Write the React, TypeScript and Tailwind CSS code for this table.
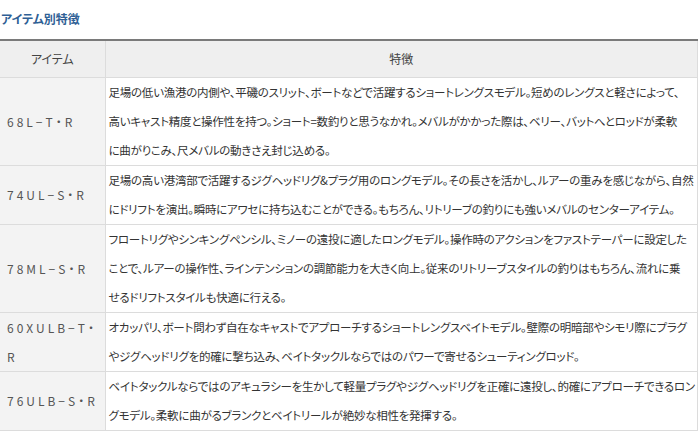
const ROWS: { item: string; lines: string[] }[] = [
  {
    item: "68L−T・R",
    lines: [
      "足場の低い漁港の内側や、平磯のスリット、ボートなどで活躍するショートレングスモデル。短めのレングスと軽さによって、",
      "高いキャスト精度と操作性を持つ。ショート=数釣りと思うなかれ。メバルがかかった際は、ベリー、バットへとロッドが柔軟",
      "に曲がりこみ、尺メバルの動きさえ封じ込める。",
    ],
  },
  {
    item: "74UL−S・R",
    lines: [
      "足場の高い港湾部で活躍するジグヘッドリグ&プラグ用のロングモデル。その長さを活かし、ルアーの重みを感じながら、自然",
      "にドリフトを演出。瞬時にアワセに持ち込むことができる。もちろん、リトリーブの釣りにも強いメバルのセンターアイテム。",
    ],
  },
  {
    item: "78ML−S・R",
    lines: [
      "フロートリグやシンキングペンシル、ミノーの遠投に適したロングモデル。操作時のアクションをファストテーパーに設定した",
      "ことで、ルアーの操作性、ラインテンションの調節能力を大きく向上。従来のリトリーブスタイルの釣りはもちろん、流れに乗",
      "せるドリフトスタイルも快適に行える。",
    ],
  },
  {
    item: "60XULB−T・R",
    lines: [
      "オカッパリ、ボート問わず自在なキャストでアプローチするショートレングスベイトモデル。壁際の明暗部やシモリ際にプラグ",
      "やジグヘッドリグを的確に撃ち込み、ベイトタックルならではのパワーで寄せるシューティングロッド。",
    ],
  },
  {
    item: "76ULB−S・R",
    lines: [
      "ベイトタックルならではのアキュラシーを生かして軽量プラグやジグヘッドリグを正確に遠投し、的確にアプローチできるロン",
      "グモデル。柔軟に曲がるブランクとベイトリールが絶妙な相性を発揮する。",
    ],
  },
];

export default function App() {
  return (
    <div
      className="h-[443px] w-[700px] overflow-hidden bg-white text-[12px] text-[#333]"
      style={{ fontFamily: '"Noto Sans CJK JP", "Noto Sans", sans-serif', fontFeatureSettings: '"palt"' }}
    >
      <h2 className="pt-[11px] pl-px text-[12px] leading-[16px] font-bold text-[#2f5f95]">
        アイテム別特徴
      </h2>

      <table className="mt-[12px] w-[698px] table-fixed border-collapse border-t-2 border-t-[#7a7a7a]">
        <colgroup>
          <col className="w-[105px]" />
          <col />
        </colgroup>
        <thead>
          <tr className="bg-[#efefef]">
            <th className="h-[37px] border-r border-b border-[#dcdcdc] text-center font-normal text-[#444]">
              アイテム
            </th>
            <th className="h-[37px] border-r border-b border-[#dcdcdc] text-center font-normal text-[#444]">
              特徴
            </th>
          </tr>
        </thead>
        <tbody>
          {ROWS.map((row) => (
            <tr key={row.item}>
              <td className="border-r border-b border-[#dcdcdc] bg-[#f3f3f3] pr-1 pl-[7px] align-middle leading-[29px] tracking-[3px] break-all text-[#555]">
                {row.item}
              </td>
              <td className="overflow-hidden border-r border-b border-[#dcdcdc] pl-[3px] text-[11.5px] leading-[29px] tracking-[-0.25px] whitespace-nowrap">
                {row.lines.map((line, i) => (
                  <div key={i}>{line}</div>
                ))}
              </td>
            </tr>
          ))}
        </tbody>
      </table>
    </div>
  );
}
